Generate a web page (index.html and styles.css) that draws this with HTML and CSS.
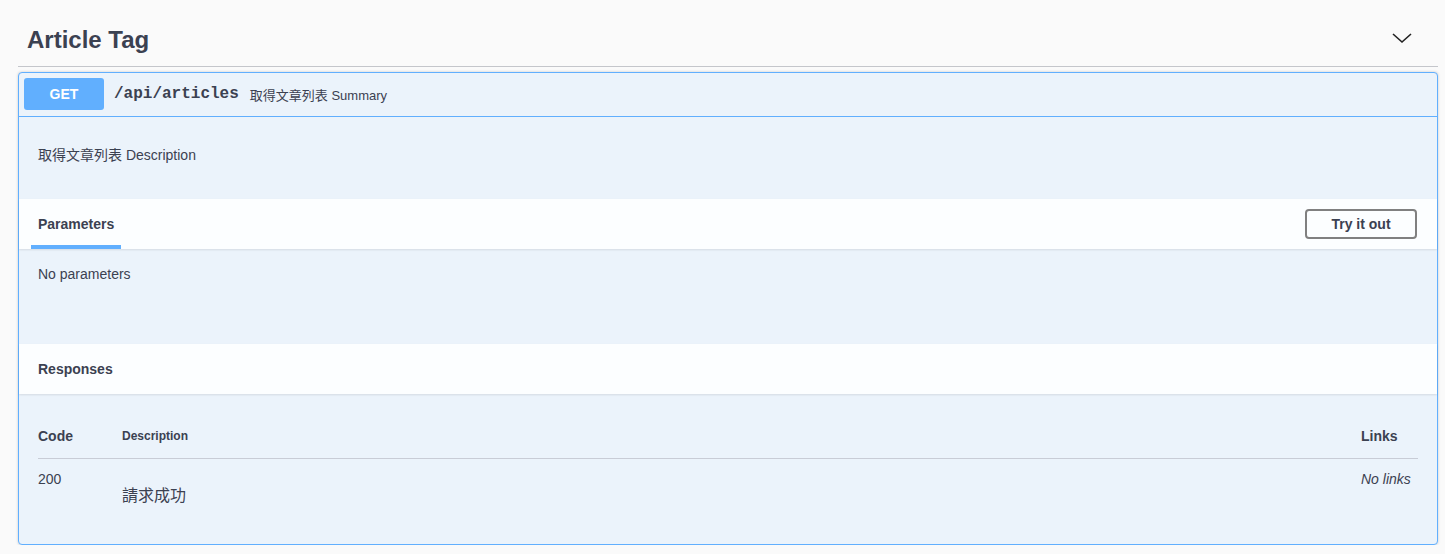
FILE: index.html
```html
<!DOCTYPE html>
<html>
<head>
  <meta charset="UTF-8">
  <title>Article Tag</title>
  <link rel="stylesheet" href="styles.css">
</head>
<body>

<div class="wrapper">
  <h3 class="tag">
    <span>Article Tag</span>
    <svg class="arrow" width="20" height="20" viewBox="0 0 20 20">
      <path d="M1 6 L10 14 L19 6" fill="none" stroke="#222" stroke-width="1.6"/>
    </svg>
  </h3>

  <div class="opblock">
    <div class="summary">
      <span class="method">GET</span>
      <span class="path">/api/articles</span>
      <span class="summary-text">取得文章列表 Summary</span>
    </div>

    <div class="description">取得文章列表 Description</div>

    <div class="section-header">
      <div class="tab">Parameters</div>
      <button class="try-out">Try it out</button>
    </div>
    <div class="params-body">No parameters</div>

    <div class="section-header">
      <div class="section-title">Responses</div>
    </div>
    <div class="responses-body">
      <table class="responses">
        <thead>
          <tr>
            <th class="col-code">Code</th>
            <th class="col-desc">Description</th>
            <th class="col-links">Links</th>
          </tr>
        </thead>
        <tbody>
          <tr>
            <td class="col-code">200</td>
            <td class="col-desc"><div class="markdown">請求成功</div></td>
            <td class="col-links"><i>No links</i></td>
          </tr>
        </tbody>
      </table>
    </div>
  </div>
</div>

</body>
</html>
```

FILE: styles.css
```css
body {
  margin: 0;
  background: #fafafa;
  font-family: "Liberation Sans", Arial, "Noto Sans CJK TC", sans-serif;
  color: #3b4151;
}
.wrapper { margin: 0 7px 0 18px; }

.tag {
  display: flex;
  align-items: center;
  justify-content: space-between;
  margin: 0;
  height: 67px;
  padding: 14px 26px 0 9px;
  box-sizing: border-box;
  border-bottom: 1px solid #c4c6cb;
  font-size: 24px;
  font-weight: bold;
}
.arrow { margin-top: -4px; }

.opblock {
  margin-top: 5px;
  border: 1px solid #61affe;
  border-radius: 4px;
  background: #ebf3fb;
  box-shadow: 0 0 3px rgba(0,0,0,0.19);
}
.summary {
  display: flex;
  align-items: center;
  padding: 5px 5px 6px;
  border-bottom: 1px solid #61affe;
}
.method {
  width: 80px;
  height: 32px;
  line-height: 32px;
  text-align: center;
  background: #61affe;
  color: #fff;
  border-radius: 3px;
  font-size: 14px;
  font-weight: bold;
}
.path {
  margin-left: 10px;
  font-family: "Liberation Mono", "Courier New", monospace;
  font-weight: bold;
  font-size: 16px;
}
.summary-text {
  margin-left: 11px;
  font-size: 13px;
}

.description {
  padding: 28px 19px 34px;
  font-size: 14px;
  line-height: 20px;
}

.section-header {
  display: flex;
  align-items: center;
  justify-content: space-between;
  height: 50px;
  padding: 0 20px 0 12px;
  background: rgba(255,255,255,0.85);
  box-shadow: 0 1px 2px rgba(0,0,0,0.1);
  box-sizing: border-box;
  font-size: 14px;
  font-weight: bold;
}
.tab {
  align-self: stretch;
  display: flex;
  align-items: center;
  padding: 0 7px;
  border-bottom: 4px solid #61affe;
  box-sizing: border-box;
  padding-top: 4px;
}
.section-title { padding-left: 7px; }
.try-out {
  width: 112px;
  height: 30px;
  border: 2px solid #808080;
  border-radius: 4px;
  background: transparent;
  font-family: inherit;
  font-size: 14px;
  font-weight: bold;
  color: #3b4151;
}

.params-body {
  height: 95px;
  padding: 17px 19px 0;
  box-sizing: border-box;
  font-size: 14px;
}

.responses-body {
  padding: 29px 19px 32px;
}
.responses {
  width: 100%;
  border-collapse: collapse;
}
.responses th {
  text-align: left;
  padding: 5px 0 14px;
  border-bottom: 1px solid #c8ccd6;
  font-size: 14px;
}
.responses th.col-desc { font-size: 12px; }
.responses td {
  vertical-align: top;
  padding: 12px 0 0;
  font-size: 14px;
}
.col-code { width: 84px; }
.col-links { width: 57px; }
.markdown {
  margin-top: 11px;
  font-size: 16px;
  height: 30px;
}
```
